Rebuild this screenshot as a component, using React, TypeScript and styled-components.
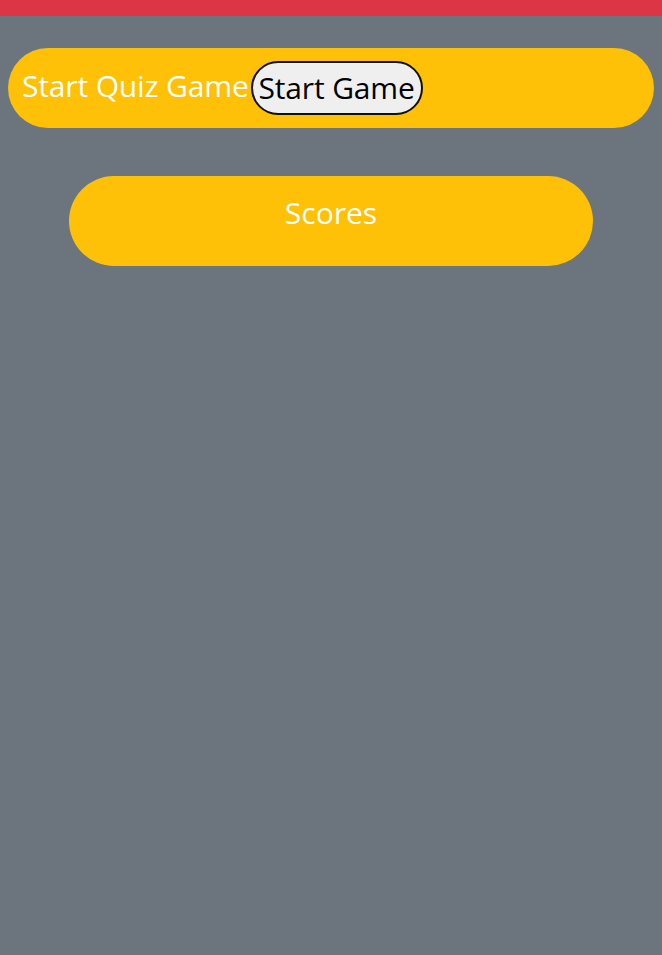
import React from "react";
import styled, { createGlobalStyle } from "styled-components";

const Global = createGlobalStyle`
  html, body {
    margin: 0;
    padding: 0;
    background: #6c757d;
    font-family: "Open Sans", "Noto Sans", sans-serif;
  }
`;

const Page = styled.div`
  min-height: 955px;
  background: #6c757d;
`;

const TopBar = styled.div`
  height: 16px;
  background: #dc3545;
`;

const Content = styled.main`
  padding: 32px 8px 0;
  display: flex;
  flex-direction: column;
  gap: 48px;
`;

const StartCard = styled.section`
  height: 80px;
  border-radius: 40px;
  background: #ffc107;
  display: flex;
  align-items: center;
  padding: 0 14px;
`;

const Label = styled.span`
  color: #fff;
  font-size: 30px;
  letter-spacing: -0.15px;
  line-height: 1;
  margin-top: -4px;
`;

const StartButton = styled.button`
  height: 54px;
  width: 172px;
  margin-left: 2px;
  border: 2px solid #111;
  border-radius: 27px;
  background: #efefef;
  color: #000;
  font-family: inherit;
  font-size: 30px;
  letter-spacing: -0.15px;
  line-height: 1;
  padding: 0;
  cursor: pointer;
`;

const ScoresCard = styled.section`
  width: 524px;
  height: 90px;
  margin: 0 auto;
  border-radius: 45px;
  background: #ffc107;
  color: #fff;
  font-size: 30px;
  line-height: 1;
  display: flex;
  justify-content: center;
  padding-top: 22px;
  box-sizing: border-box;
`;

export default function App() {
  return (
    <Page>
      <Global />
      <TopBar />
      <Content>
        <StartCard>
          <Label>Start Quiz Game</Label>
          <StartButton>Start Game</StartButton>
        </StartCard>
        <ScoresCard>Scores</ScoresCard>
      </Content>
    </Page>
  );
}
